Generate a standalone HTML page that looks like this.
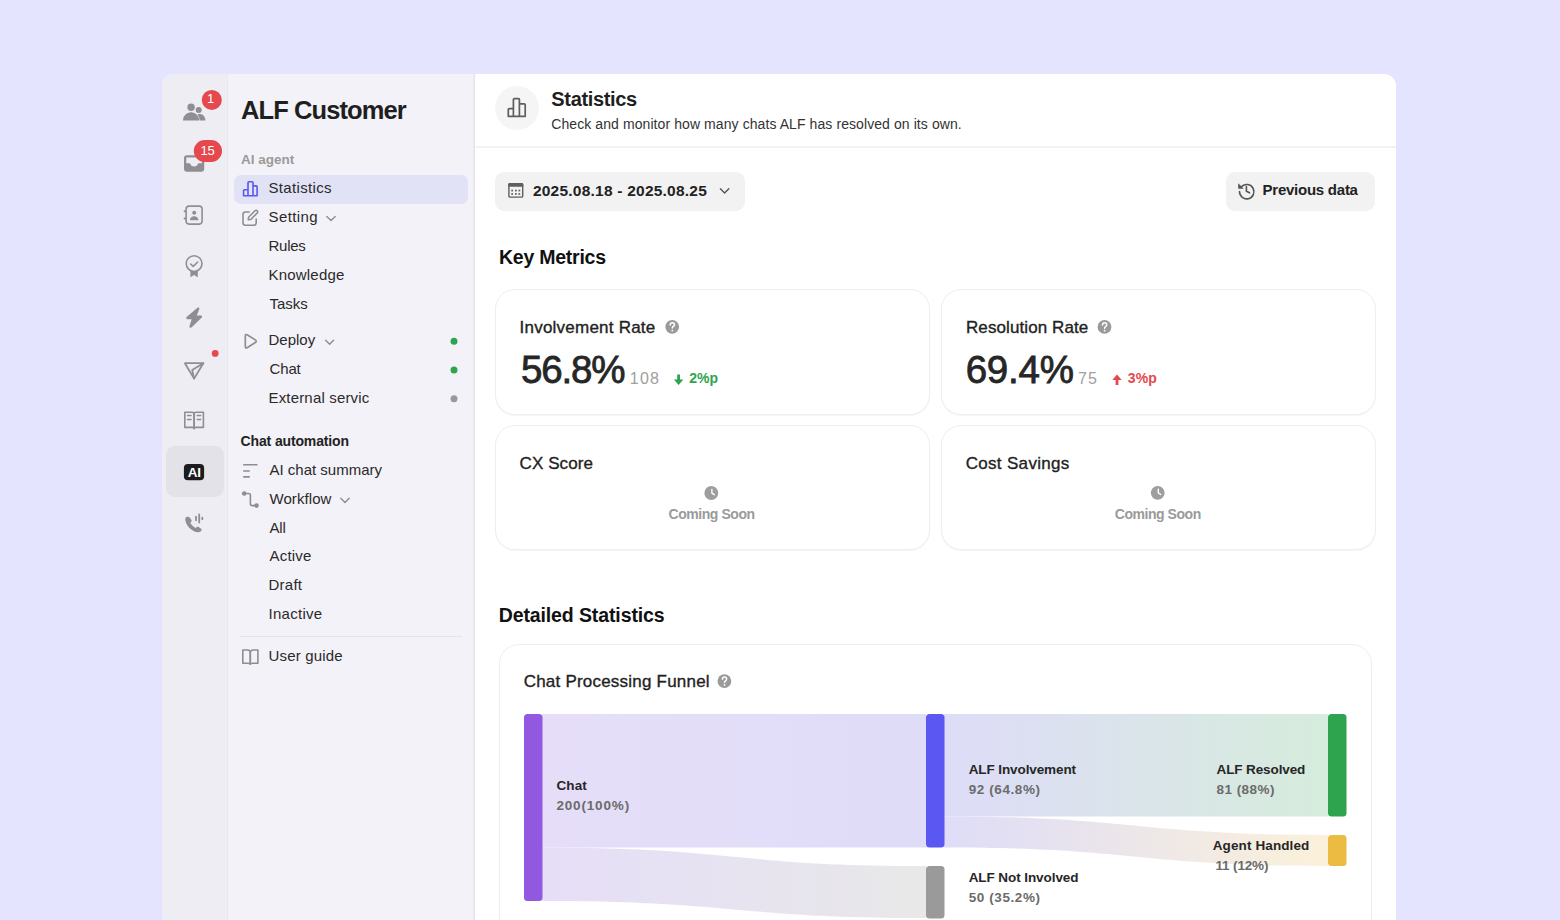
<!DOCTYPE html>
<html><head><meta charset="utf-8">
<style>
html,body{margin:0;padding:0}
body{width:1560px;height:920px;overflow:hidden;background:#e4e4fe;position:relative;font-family:"Liberation Sans",sans-serif}
.abs{position:absolute}
.t{position:absolute;white-space:nowrap;line-height:normal;font-family:"Liberation Sans",sans-serif}
#frame{position:absolute;left:162px;top:74px;width:1234px;height:870px;border-radius:12px 12px 0 0;overflow:hidden;background:#fff}
#rail{position:absolute;left:0;top:0;width:66px;height:100%;background:#ededf3;box-shadow:inset -1px 0 0 #e8e7ee}
#side{position:absolute;left:66px;top:0;width:246px;height:100%;background:#f3f2f8;border-right:1px solid #e5e4eb;box-shadow:inset -1px 0 0 #ebeaf0}
.card{position:absolute;background:#fff;border:1px solid #eeeeee;border-radius:20px;box-sizing:border-box;box-shadow:0 1px 1px rgba(0,0,0,0.04)}
svg{position:absolute;left:0;top:0}
</style></head>
<body>
<div id="frame">
  <div id="rail"></div>
  <div id="side"></div>
</div>
<!-- rail active -->
<div class="abs" style="left:166px;top:446px;width:58px;height:51px;border-radius:9px;background:#e2e2e8"></div>
<!-- sidebar active -->
<div class="abs" style="left:234px;top:175px;width:234px;height:28.5px;border-radius:7px;background:#e2e2f6"></div>
<!-- sidebar separator -->
<div class="abs" style="left:240px;top:635.5px;width:222px;height:1.5px;background:#e3e3e8"></div>
<!-- header border -->
<div class="abs" style="left:475px;top:146px;width:921px;height:2px;background:#f2f2f2"></div>
<!-- header icon bg -->
<div class="abs" style="left:495px;top:86px;width:44px;height:44px;border-radius:22px;background:#f5f5f5"></div>
<!-- date picker -->
<div class="abs" style="left:495px;top:172px;width:250px;height:38.5px;border-radius:9px;background:#f2f2f2"></div>
<!-- previous data -->
<div class="abs" style="left:1226px;top:172px;width:149px;height:38.5px;border-radius:9px;background:#f2f2f2"></div>
<!-- cards -->
<div class="card" style="left:494.5px;top:289px;width:435px;height:125.5px"></div>
<div class="card" style="left:940.5px;top:289px;width:435px;height:125.5px"></div>
<div class="card" style="left:494.5px;top:425px;width:435px;height:124.5px"></div>
<div class="card" style="left:940.5px;top:425px;width:435px;height:124.5px"></div>
<div class="card" style="left:498.5px;top:644px;width:873.5px;height:320px"></div>

<svg width="1560" height="920" viewBox="0 0 1560 920">
<defs>
  <linearGradient id="g1" x1="542" x2="926" y1="0" y2="0" gradientUnits="userSpaceOnUse">
    <stop offset="0" stop-color="#e6def8"/><stop offset="1" stop-color="#dfdcf8"/></linearGradient>
  <linearGradient id="g2" x1="542" x2="926" y1="0" y2="0" gradientUnits="userSpaceOnUse">
    <stop offset="0" stop-color="#e6def8"/><stop offset="1" stop-color="#e8e8e8"/></linearGradient>
  <linearGradient id="g3" x1="944" x2="1328" y1="0" y2="0" gradientUnits="userSpaceOnUse">
    <stop offset="0" stop-color="#dedcf8"/><stop offset="1" stop-color="#d6ecdc"/></linearGradient>
  <linearGradient id="g4" x1="944" x2="1328" y1="0" y2="0" gradientUnits="userSpaceOnUse">
    <stop offset="0" stop-color="#dedcf8"/><stop offset="1" stop-color="#fbf1da"/></linearGradient>
</defs>
<!-- funnel flows -->
<path d="M542,714 H926 V847.5 H542 Z" fill="url(#g1)"/>
<path d="M542,847.5 C734,847.5 734,866 926,866 L926,918 C734,918 734,901 542,901 Z" fill="url(#g2)"/>
<path d="M944,714 H1328 V816.5 H944 Z" fill="url(#g3)"/>
<path d="M944,816.5 C1136,816.5 1136,835 1328,835 L1328,866 C1136,866 1136,847.5 944,847.5 Z" fill="url(#g4)"/>
<!-- funnel bars -->
<rect x="524" y="714" width="18.5" height="187" rx="3.5" fill="#9059e0"/>
<rect x="926" y="714" width="18.5" height="133.5" rx="3.5" fill="#5b57f2"/>
<rect x="926" y="866" width="18.5" height="52.5" rx="3.5" fill="#9a9a9a"/>
<rect x="1328" y="714" width="18.5" height="102.5" rx="3.5" fill="#2ea44f"/>
<rect x="1328" y="835" width="18.5" height="31" rx="3.5" fill="#ecbb42"/>

<!-- RAIL ICONS -->
<g fill="#8e8e93">
  <!-- people -->
  <circle cx="191.1" cy="107.2" r="3.7"/>
  <circle cx="198.7" cy="110" r="3"/>
  <path d="M199.3,120.6 L205.4,120.6 C205.4,116.8 203.1,113.9 199.9,113.9 C198.5,113.9 197.3,114.4 196.4,115.3 Z"/>
  <path d="M183,120.6 C183,115.9 186.6,112.2 191.05,112.2 C195.5,112.2 199.1,115.9 199.1,120.6 Z" stroke="#ededf3" stroke-width="1.2"/>
  <path d="M183,120.6 C183,115.9 186.6,112.2 191.05,112.2 C195.5,112.2 199.1,115.9 199.1,120.6 Z"/>
  <!-- inbox -->
  <rect x="184" y="155.2" width="20.2" height="16.6" rx="3"/>
  <path d="M186.3,157.4 H201.9 V163.3 H198.2 C197.6,165.4 196,166.6 194.1,166.6 C192.2,166.6 190.6,165.4 190,163.3 H186.3 Z" fill="#ededf3"/>
  <!-- bolt -->
  <path d="M198.2,308.6 L187.4,318 L193.3,318 L190.6,326.6 L201,316.6 L195.1,316.6 Z" stroke="#8e8e93" stroke-width="2.4" stroke-linejoin="round"/>
  <!-- award ribbon -->
  <path d="M190.4,271 L190.4,277.2 L194.1,275 L197.8,277.2 L197.8,271 Z"/>
  <!-- phone -->
  <path d="M187.6,516.8 C186.6,516.4 185.4,517.4 185.3,518.8 C185.1,521.6 186.6,525 189.2,527.8 C191.9,530.6 195.3,532.4 198.4,532.3 C199.9,532.2 201.4,531.3 201.6,530.3 C201.8,529.6 201.5,529 200.8,528.5 L198.6,527 C197.9,526.5 197,526.6 196.4,527.2 L195.6,528 C193.6,527 191.3,524.8 190.3,522.8 L191.1,522 C191.7,521.4 191.8,520.5 191.3,519.8 L189.7,517.4 C189.2,516.8 188.3,516.6 187.6,516.8 Z"/>
</g>
<g fill="none" stroke="#8e8e93" stroke-width="1.6" stroke-linecap="round" stroke-linejoin="round">
  <!-- contact -->
  <rect x="186.1" y="206.1" width="16" height="18" rx="3"/>
  <path d="M184.6,211.3 H185.6 M184.6,218.6 H185.6" stroke-width="2"/>
  <!-- award circle -->
  <circle cx="194.1" cy="263.6" r="7.9"/>
  <path d="M190.6,264 L193.2,266.4 L197.7,262"/>
  <!-- send -->
  <path d="M184.9,363.2 L203.3,363.2 L194.1,378.6 Z" stroke-width="1.8"/>
  <path d="M203.3,363.2 L192.2,370 L194.1,378.6" stroke-width="1.8"/>
  <!-- book -->
  <path d="M184.8,412.2 H192 Q194.1,412.2 194.1,414.2 V428.6 Q194.1,427.4 192,427.4 H184.8 Z"/>
  <path d="M203.4,412.2 H196.2 Q194.1,412.2 194.1,414.2 V428.6 Q194.1,427.4 196.2,427.4 H203.4 Z"/>
  <path d="M187.5,415.6 H191 M187.5,419.6 H191 M197.2,415.6 H200.7 M197.2,419.6 H200.7" stroke-width="1.5"/>
  <!-- phone waves -->
  <path d="M196,516.6 V520.2 M199.2,514.4 V522.4 M202.3,517.6 V519.2" stroke-width="1.8"/>
</g>
<g fill="#8e8e93">
  <circle cx="194.2" cy="212.7" r="2"/>
  <path d="M189.8,220.2 C190.2,217.8 192,216.2 194.2,216.2 C196.4,216.2 198.2,217.8 198.6,220.2 Z"/>
</g>
<!-- badges -->
<circle cx="211.8" cy="99.9" r="10" fill="#e5484d"/>
<rect x="193.8" y="140" width="28.2" height="22" rx="11" fill="#e5484d"/>
<circle cx="215.2" cy="353.4" r="3.4" fill="#e5484d"/>
<!-- AI badge -->
<rect x="183.9" y="463.9" width="20.2" height="16.4" rx="4" fill="#1c1c1e"/>

<!-- SIDEBAR ICONS -->
<g fill="none" stroke="#8e8e8e" stroke-width="1.6" stroke-linecap="round" stroke-linejoin="round">
  <!-- edit -->
  <path d="M249.2,212 H245.4 Q243,212 243,214.4 V222.8 Q243,225.2 245.4,225.2 H253.8 Q256.2,225.2 256.2,222.8 V219"/>
  <path d="M248.3,219.8 L248.6,217.2 L255,210.8 Q256.1,209.7 257.2,210.8 Q258.3,211.9 257.2,213 L250.8,219.5 Z"/>
  <!-- play -->
  <path d="M245.3,336.2 Q245.3,333.6 247.5,335 L255.3,339.9 Q257.2,341.2 255.3,342.5 L247.5,347.5 Q245.3,348.9 245.3,346.3 Z" stroke-width="1.7"/>
  <!-- list -->
  <path d="M243.2,464.8 H257.5 M243.2,471 H249.8 M243.2,476.9 H249.8" stroke-linecap="butt"/>
  <!-- workflow -->
  <path d="M244.2,493.5 H248.6 Q250.4,493.5 250.4,495.3 V503.8 Q250.4,505.6 252.2,505.6 H256.5"/>
  <!-- user guide book -->
  <path d="M242.8,650 H247.6 Q250.3,650 250.3,652.7 V664.2 Q250.3,663.2 247.6,663.2 H242.8 Z"/>
  <path d="M257.9,650 H253 Q250.3,650 250.3,652.7 V664.2 Q250.3,663.2 253,663.2 H257.9 Z"/>
  <!-- chevrons -->
  <path d="M326.8,216.4 L331,220.6 L335.2,216.4" stroke-width="1.4"/>
  <path d="M325.6,340.2 L329.6,344.2 L333.6,340.2" stroke-width="1.4"/>
  <path d="M340.8,498.2 L345,502.4 L349.2,498.2" stroke-width="1.4"/>
</g>
<g fill="#8e8e8e">
  <circle cx="244.2" cy="493.5" r="2.3"/>
  <circle cx="256.5" cy="505.6" r="2.3"/>
</g>
<!-- stats icon (purple) -->
<path d="M243.6,195.7 V190.6 Q243.6,189.8 244.4,189.8 H248 V182.5 Q248,181.7 248.8,181.7 H252.2 Q253,181.7 253,182.5 V185.9 H256.3 Q257.1,185.9 257.1,186.7 V195.7 Z M248,195.7 V189.8 M253,195.7 V185.9" fill="none" stroke="#5b57f0" stroke-width="1.6" stroke-linejoin="round"/>
<!-- status dots -->
<circle cx="454" cy="341.3" r="3.5" fill="#2ea44f"/>
<circle cx="454" cy="370.1" r="3.5" fill="#2ea44f"/>
<circle cx="454" cy="398.8" r="3.5" fill="#999"/>

<!-- MAIN ICONS -->
<!-- header stats icon -->
<path d="M508.3,116.3 V109.6 Q508.3,108.6 509.3,108.6 H513.4 V99.6 Q513.4,98.6 514.4,98.6 H518.4 Q519.4,98.6 519.4,99.6 V103.8 H524.2 Q525.2,103.8 525.2,104.8 V116.3 Z M513.4,116.3 V108.6 M519.4,116.3 V103.8" fill="none" stroke="#5e5e5e" stroke-width="1.7" stroke-linejoin="round"/>
<!-- calendar -->
<rect x="508.9" y="183.7" width="13.8" height="13.4" rx="1.2" fill="none" stroke="#5e5e5e" stroke-width="1.4"/>
<rect x="508.2" y="183" width="15.1" height="3.8" rx="1.4" fill="#5e5e5e"/>
<g fill="#5e5e5e">
  <rect x="511.3" y="189.7" width="1.7" height="1.7"/><rect x="515" y="189.7" width="1.7" height="1.7"/><rect x="518.5" y="189.7" width="1.7" height="1.7"/>
  <rect x="511.3" y="193.1" width="1.7" height="1.7"/><rect x="515" y="193.1" width="1.7" height="1.7"/><rect x="518.5" y="193.1" width="1.7" height="1.7"/>
</g>
<path d="M720.4,188.8 L724.6,193 L728.8,188.8" fill="none" stroke="#555" stroke-width="1.4" stroke-linecap="round" stroke-linejoin="round"/>
<!-- history -->
<path d="M1241.8,186.4 A7.2,7.2 0 1 1 1239.5,191.6" fill="none" stroke="#555" stroke-width="1.6" stroke-linecap="round"/>
<path d="M1238.2,183.2 L1238.2,188.8 L1243.8,188.7 Z" fill="#555"/>
<path d="M1246.4,186.6 V191.3 L1249.5,192.8" fill="none" stroke="#555" stroke-width="1.6" stroke-linecap="round" stroke-linejoin="round"/>
<!-- help icons -->
<g>
  <circle cx="672.2" cy="326.8" r="6.9" fill="#9a9a9a"/>
  <circle cx="1104.5" cy="326.9" r="6.9" fill="#9a9a9a"/>
  <circle cx="724.4" cy="681.1" r="6.9" fill="#9a9a9a"/>
</g>
<g fill="none" stroke="#fff" stroke-width="1.5" stroke-linecap="round">
  <path d="M670.2,324.9 Q670.2,322.7 672.3,322.7 Q674.4,322.7 674.4,324.7 Q674.4,325.9 673.2,326.5 Q672.3,327 672.3,328.1"/>
  <path d="M1102.5,325 Q1102.5,322.8 1104.6,322.8 Q1106.7,322.8 1106.7,324.8 Q1106.7,326 1105.5,326.6 Q1104.6,327.1 1104.6,328.2"/>
  <path d="M722.4,679.2 Q722.4,677 724.5,677 Q726.6,677 726.6,679 Q726.6,680.2 725.4,680.8 Q724.5,681.3 724.5,682.4"/>
</g>
<g fill="#fff"><circle cx="672.3" cy="330.6" r="0.9"/><circle cx="1104.6" cy="330.7" r="0.9"/><circle cx="724.5" cy="684.9" r="0.9"/></g>
<!-- arrows -->
<path d="M677.2,374.6 H680 V379.6 H683.3 L678.6,385 L673.9,379.6 H677.2 Z" fill="#2ea44f"/>
<path d="M1115.6,385 H1118.4 V380 H1121.7 L1117,374.6 L1112.3,380 H1115.6 Z" fill="#e5484d"/>
<!-- coming soon clocks -->
<circle cx="711.3" cy="493" r="6.9" fill="#9e9e9e"/>
<circle cx="1157.7" cy="492.8" r="6.9" fill="#9e9e9e"/>
<path d="M711.9,489.4 V493.1 L714.3,494.7 M1158.3,489.2 V492.9 L1160.7,494.5" fill="none" stroke="#fff" stroke-width="1.4" stroke-linecap="round" stroke-linejoin="round"/>
</svg>
<span class="t" style="left:241.00px;top:96.20px;font-size:25.5px;font-weight:700;color:#1f1f1f;letter-spacing:-0.909px">ALF Customer</span>
<span class="t" style="left:241.00px;top:151.70px;font-size:13.5px;font-weight:700;color:#9a9a9a">AI agent</span>
<span class="t" style="left:268.50px;top:179.00px;font-size:15px;font-weight:400;color:#2a2a2a;letter-spacing:0.333px">Statistics</span>
<span class="t" style="left:268.50px;top:208.00px;font-size:15px;font-weight:400;color:#2a2a2a;letter-spacing:0.417px">Setting</span>
<span class="t" style="left:268.50px;top:237.00px;font-size:15px;font-weight:400;color:#2a2a2a;letter-spacing:-0.250px">Rules</span>
<span class="t" style="left:268.50px;top:266.00px;font-size:15px;font-weight:400;color:#2a2a2a;letter-spacing:0.200px">Knowledge</span>
<span class="t" style="left:269.50px;top:294.50px;font-size:15px;font-weight:400;color:#2a2a2a">Tasks</span>
<span class="t" style="left:268.50px;top:331.00px;font-size:15px;font-weight:400;color:#2a2a2a">Deploy</span>
<span class="t" style="left:269.50px;top:360.00px;font-size:15px;font-weight:400;color:#2a2a2a;letter-spacing:-0.133px">Chat</span>
<span class="t" style="left:268.50px;top:388.50px;font-size:15px;font-weight:400;color:#2a2a2a;letter-spacing:0.171px">External servic</span>
<span class="t" style="left:269.50px;top:461.00px;font-size:15px;font-weight:400;color:#2a2a2a">AI chat summary</span>
<span class="t" style="left:269.50px;top:489.75px;font-size:15px;font-weight:400;color:#2a2a2a;letter-spacing:0.071px">Workflow</span>
<span class="t" style="left:269.50px;top:518.50px;font-size:15px;font-weight:400;color:#2a2a2a;letter-spacing:-0.200px">All</span>
<span class="t" style="left:269.50px;top:547.25px;font-size:15px;font-weight:400;color:#2a2a2a;letter-spacing:0.200px">Active</span>
<span class="t" style="left:268.50px;top:576.00px;font-size:15px;font-weight:400;color:#2a2a2a;letter-spacing:0.250px">Draft</span>
<span class="t" style="left:268.50px;top:604.75px;font-size:15px;font-weight:400;color:#2a2a2a;letter-spacing:0.286px">Inactive</span>
<span class="t" style="left:268.50px;top:647.20px;font-size:15px;font-weight:400;color:#2a2a2a;letter-spacing:0.178px">User guide</span>
<span class="t" style="left:240.60px;top:433.25px;font-size:14px;font-weight:700;color:#222;letter-spacing:-0.143px">Chat automation</span>
<span class="t" style="left:551.30px;top:88.00px;font-size:20px;font-weight:700;color:#1f1f1f;letter-spacing:-0.333px">Statistics</span>
<span class="t" style="left:551.30px;top:116.00px;font-size:14px;font-weight:400;color:#333;letter-spacing:0.083px">Check and monitor how many chats ALF has resolved on its own.</span>
<span class="t" style="left:532.90px;top:181.50px;font-size:15.5px;font-weight:700;color:#222;letter-spacing:0.227px">2025.08.18 - 2025.08.25</span>
<span class="t" style="left:1262.60px;top:181.30px;font-size:15px;font-weight:700;color:#222;letter-spacing:-0.250px">Previous data</span>
<span class="t" style="left:499.00px;top:245.80px;font-size:19.5px;font-weight:700;color:#111;letter-spacing:-0.240px">Key Metrics</span>
<span class="t" style="left:519.50px;top:318.00px;font-size:17px;font-weight:400;color:#222;letter-spacing:0.233px;-webkit-text-stroke:0.35px #222">Involvement Rate</span>
<span class="t" style="left:521.00px;top:348.30px;font-size:38.5px;font-weight:400;color:#262626;letter-spacing:-1.200px;-webkit-text-stroke:0.8px #262626">56.8%</span>
<span class="t" style="left:629.80px;top:369.70px;font-size:16px;font-weight:400;color:#a0a0a0;letter-spacing:1.250px">108</span>
<span class="t" style="left:689.20px;top:370.30px;font-size:14px;font-weight:700;color:#2ea44f;letter-spacing:0.050px">2%p</span>
<span class="t" style="left:966.00px;top:318.00px;font-size:17px;font-weight:400;color:#222;letter-spacing:0.093px;-webkit-text-stroke:0.35px #222">Resolution Rate</span>
<span class="t" style="left:965.70px;top:348.20px;font-size:38.5px;font-weight:400;color:#262626;letter-spacing:-0.225px;-webkit-text-stroke:0.8px #262626">69.4%</span>
<span class="t" style="left:1078.10px;top:369.90px;font-size:16px;font-weight:400;color:#a0a0a0;letter-spacing:1.100px">75</span>
<span class="t" style="left:1127.80px;top:370.20px;font-size:14px;font-weight:700;color:#e5484d;letter-spacing:0.150px">3%p</span>
<span class="t" style="left:519.50px;top:453.70px;font-size:17px;font-weight:400;color:#1f1f1f;letter-spacing:0.100px;-webkit-text-stroke:0.35px #1f1f1f">CX Score</span>
<span class="t" style="left:965.70px;top:453.70px;font-size:17px;font-weight:400;color:#1f1f1f;letter-spacing:0.318px;-webkit-text-stroke:0.35px #1f1f1f">Cost Savings</span>
<span class="t" style="left:668.55px;top:506.20px;font-size:14px;font-weight:700;color:#9a9a9a;letter-spacing:-0.450px">Coming Soon</span>
<span class="t" style="left:1114.75px;top:506.20px;font-size:14px;font-weight:700;color:#9a9a9a;letter-spacing:-0.450px">Coming Soon</span>
<span class="t" style="left:498.70px;top:604.00px;font-size:19.5px;font-weight:700;color:#111;letter-spacing:-0.111px">Detailed Statistics</span>
<span class="t" style="left:523.70px;top:672.00px;font-size:17px;font-weight:400;color:#1f1f1f;letter-spacing:0.214px;-webkit-text-stroke:0.35px #1f1f1f">Chat Processing Funnel</span>
<span class="t" style="left:556.40px;top:778.20px;font-size:13.5px;font-weight:700;color:#262626;letter-spacing:0.133px">Chat</span>
<span class="t" style="left:556.40px;top:798.00px;font-size:13.5px;font-weight:700;color:#6b6b6b;letter-spacing:0.838px">200(100%)</span>
<span class="t" style="left:968.70px;top:762.20px;font-size:13.5px;font-weight:700;color:#262626;letter-spacing:-0.100px">ALF Involvement</span>
<span class="t" style="left:968.70px;top:782.00px;font-size:13.5px;font-weight:700;color:#6b6b6b;letter-spacing:0.589px">92 (64.8%)</span>
<span class="t" style="left:968.70px;top:870.30px;font-size:13.5px;font-weight:700;color:#262626;letter-spacing:-0.080px">ALF Not Involved</span>
<span class="t" style="left:968.70px;top:890.20px;font-size:13.5px;font-weight:700;color:#6b6b6b;letter-spacing:0.589px">50 (35.2%)</span>
<span class="t" style="left:1216.50px;top:762.20px;font-size:13.5px;font-weight:700;color:#262626;letter-spacing:-0.109px">ALF Resolved</span>
<span class="t" style="left:1216.50px;top:782.00px;font-size:13.5px;font-weight:700;color:#6b6b6b;letter-spacing:0.457px">81 (88%)</span>
<span class="t" style="left:1212.70px;top:838.20px;font-size:13.5px;font-weight:700;color:#262626;letter-spacing:0.117px">Agent Handled</span>
<span class="t" style="left:1215.50px;top:857.90px;font-size:13.5px;font-weight:700;color:#6b6b6b;letter-spacing:-0.157px">11 (12%)</span>
<span class="t" style="left:207.00px;top:91.40px;font-size:13px;font-weight:400;color:#fff">1</span>
<span class="t" style="left:200.40px;top:142.70px;font-size:13px;font-weight:400;color:#fff">15</span>
<span class="t" style="left:187.65px;top:464.80px;font-size:13.5px;font-weight:700;color:#fff;letter-spacing:-0.100px">AI</span>
</body></html>
